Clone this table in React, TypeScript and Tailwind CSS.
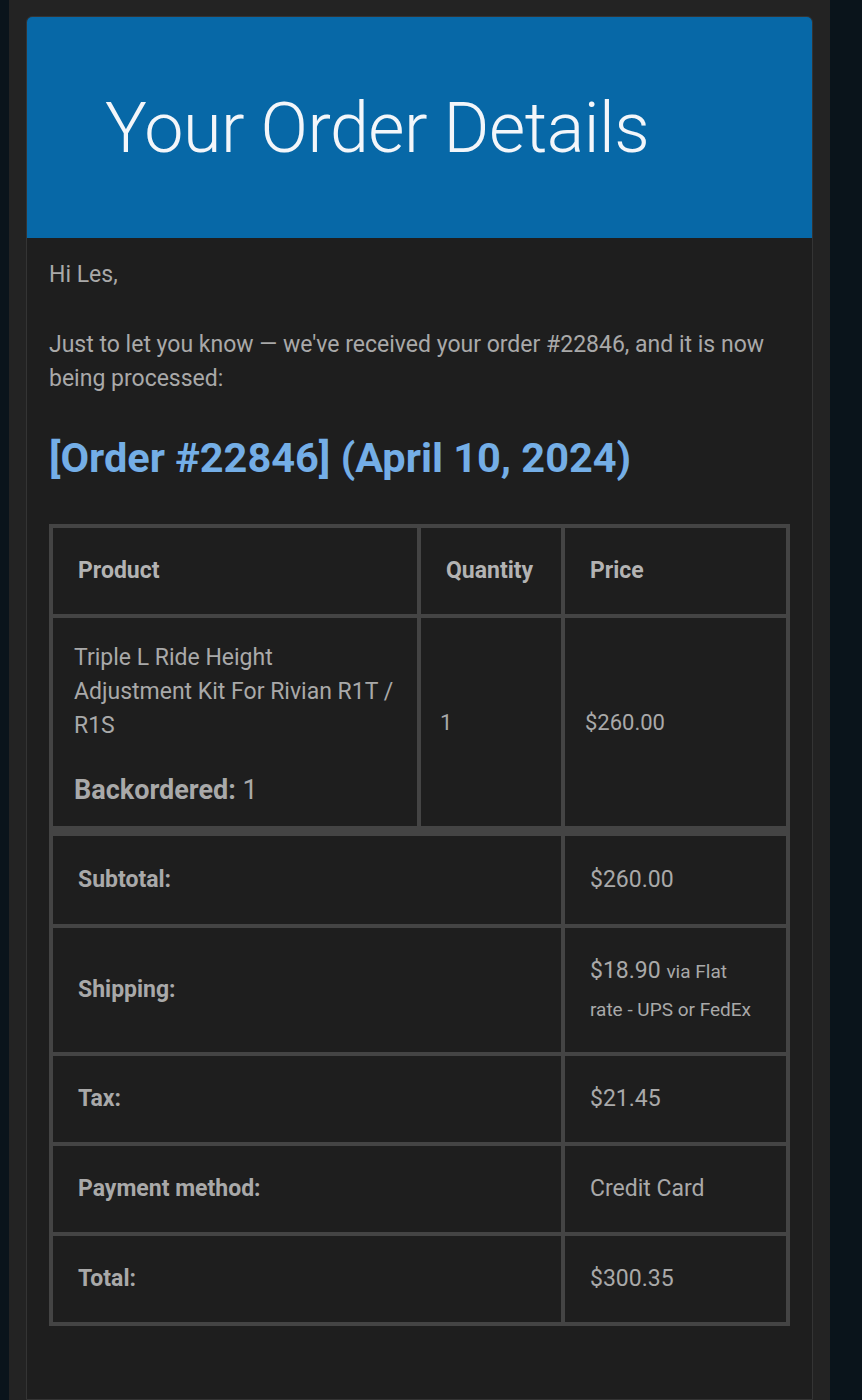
import React from "react";

export default function App() {
  const font = { fontFamily: "Roboto, 'Liberation Sans', sans-serif" };
  return (
    <div className="min-h-[1400px] bg-[#0a141b] pl-[9px] pr-[32px]" style={font}>
      <div className="min-h-[1400px] bg-[#232323] px-[17px] pt-[16px]">
        <div className="min-h-[1384px] rounded-t-[6px] border border-[#343434] bg-[#1e1e1e]">
          <div className="flex h-[221px] items-center rounded-t-[5px] bg-[#0768a7] pl-[78px]">
            <h1 className="text-[70px] font-light leading-none tracking-[-0.5px] text-[#f3f6fa]">Your Order Details</h1>
          </div>
          <div className="px-[22px] pt-[20px] text-[23px] leading-[34px] text-[#a9a9a9]">
            <p>Hi Les,</p>
            <p className="mt-[36px]">Just to let you know — we've received your order #22846, and it is now being processed:</p>
            <h2 className="mt-[38px] text-[41.5px] font-bold leading-[48px] text-[#74aee6]">[Order #22846] (April 10, 2024)</h2>
            <table className="mt-[42px] w-[741px] border-separate border-spacing-0 border-2 border-[#444444] text-[#a9a9a9]">
              <thead>
                <tr className="h-[90px]">
                  <th className="w-[368px] border-2 border-[#444444] pl-[25px] text-left text-[23px] font-bold text-[#b3b3b3]">Product</th>
                  <th className="w-[144px] border-2 border-[#444444] pl-[25px] text-left text-[23px] font-bold text-[#b3b3b3]">Quantity</th>
                  <th className="border-2 border-[#444444] pl-[25px] text-left text-[23px] font-bold text-[#b3b3b3]">Price</th>
                </tr>
              </thead>
              <tbody>
                <tr className="h-[212px]">
                  <td className="border-2 border-[#444444] pl-[21px] pr-[10px] pt-[4px] align-middle">
                    <div className="text-[23px] leading-[34px]">Triple L Ride Height<br />Adjustment Kit For Rivian R1T /<br />R1S</div>
                    <div className="mt-[29px] text-[27px] leading-[36px]"><b className="font-bold">Backordered:</b> 1</div>
                  </td>
                  <td className="border-2 border-[#444444] pl-[19px] pt-[2px] text-[22px]">1</td>
                  <td className="border-2 border-[#444444] pl-[20px] pt-[2px] text-[22px]">$260.00</td>
                </tr>
              </tbody>
              <tfoot>
                <tr className="h-[98px]">
                  <th colSpan={2} className="border-2 border-t-[8px] border-[#444444] pl-[25px] text-left text-[23px] font-bold">Subtotal:</th>
                  <td className="border-2 border-t-[8px] border-[#444444] pl-[25px] text-[23px]">$260.00</td>
                </tr>
                <tr className="h-[128px]">
                  <th colSpan={2} className="border-2 border-[#444444] pl-[25px] text-left text-[23px] font-bold">Shipping:</th>
                  <td className="border-2 border-[#444444] pl-[25px] pr-[26px] text-[23px] leading-[37px]">$18.90 <span className="text-[19px] leading-[37px]">via Flat rate - UPS or FedEx</span></td>
                </tr>
                <tr className="h-[90px]">
                  <th colSpan={2} className="border-2 border-[#444444] pl-[25px] text-left text-[23px] font-bold">Tax:</th>
                  <td className="border-2 border-[#444444] pl-[25px] text-[23px]">$21.45</td>
                </tr>
                <tr className="h-[90px]">
                  <th colSpan={2} className="border-2 border-[#444444] pl-[25px] text-left text-[23px] font-bold">Payment method:</th>
                  <td className="border-2 border-[#444444] pl-[25px] text-[23px]">Credit Card</td>
                </tr>
                <tr className="h-[90px]">
                  <th colSpan={2} className="border-2 border-[#444444] pl-[25px] text-left text-[23px] font-bold">Total:</th>
                  <td className="border-2 border-[#444444] pl-[25px] text-[23px]">$300.35</td>
                </tr>
              </tfoot>
            </table>
          </div>
        </div>
      </div>
    </div>
  );
}
